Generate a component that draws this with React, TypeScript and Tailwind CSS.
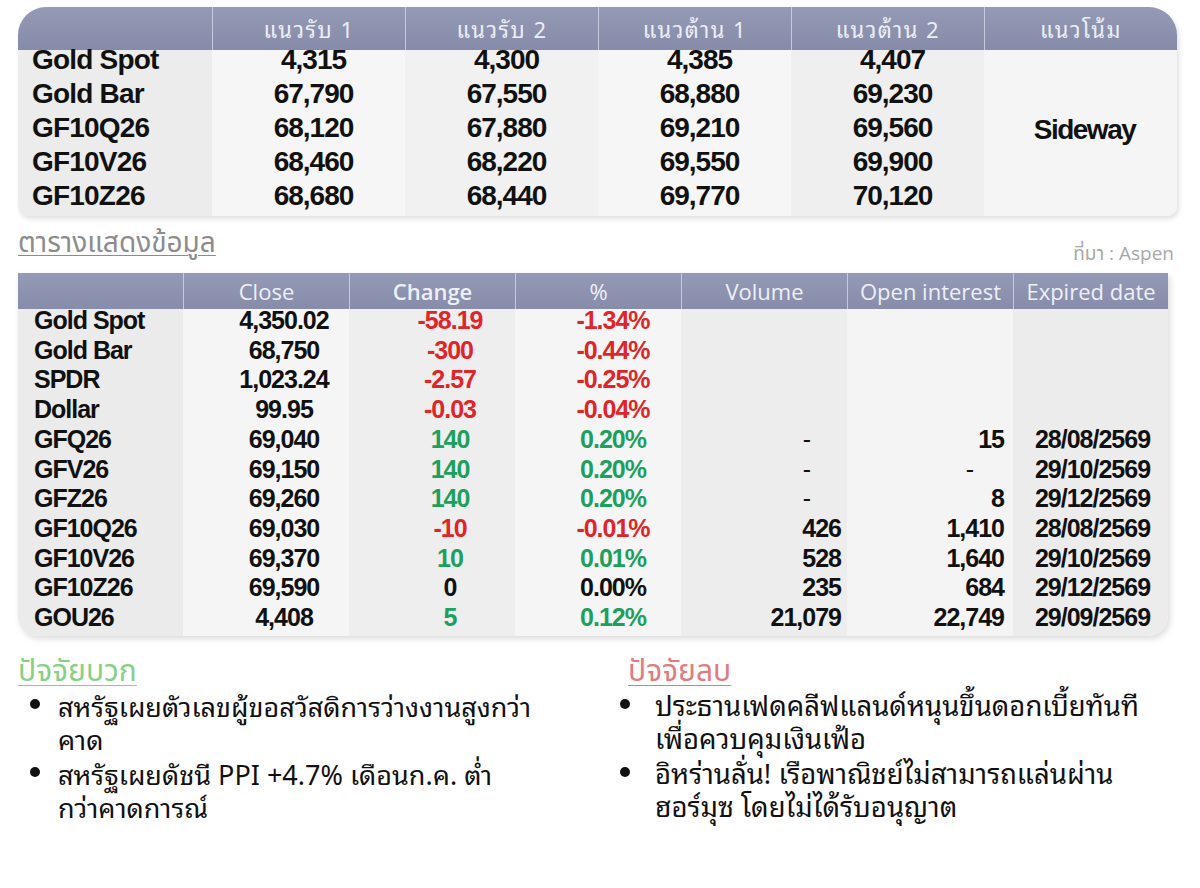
import React from 'react';

const THAI = { fontFamily: '"Noto Sans Thai", "Loma", "Garuda", "Tahoma", "DejaVu Sans", sans-serif' };
const THAI_LOOP = { fontFamily: '"Noto Sans Thai Looped", "Noto Serif Thai", "Garuda", "Noto Sans Thai", sans-serif' };
const NUM = { fontFamily: '"Liberation Sans", Arial, sans-serif' };
const HEAD = { fontFamily: '"Open Sans", "Noto Sans", sans-serif' };

const LEVELS = [
  ['Gold Spot', '4,315', '4,300', '4,385', '4,407'],
  ['Gold Bar', '67,790', '67,550', '68,880', '69,230'],
  ['GF10Q26', '68,120', '67,880', '69,210', '69,560'],
  ['GF10V26', '68,460', '68,220', '69,550', '69,900'],
  ['GF10Z26', '68,680', '68,440', '69,770', '70,120'],
];

type Dir = 'up' | 'down' | 'flat';

const MARKET: { name: string; close: string; change: string; pct: string; dir: Dir; vol: string; oi: string; exp: string }[] = [
  { name: 'Gold Spot', close: '4,350.02', change: '-58.19', pct: '-1.34%', dir: 'down', vol: '', oi: '', exp: '' },
  { name: 'Gold Bar', close: '68,750', change: '-300', pct: '-0.44%', dir: 'down', vol: '', oi: '', exp: '' },
  { name: 'SPDR', close: '1,023.24', change: '-2.57', pct: '-0.25%', dir: 'down', vol: '', oi: '', exp: '' },
  { name: 'Dollar', close: '99.95', change: '-0.03', pct: '-0.04%', dir: 'down', vol: '', oi: '', exp: '' },
  { name: 'GFQ26', close: '69,040', change: '140', pct: '0.20%', dir: 'up', vol: '-', oi: '15', exp: '28/08/2569' },
  { name: 'GFV26', close: '69,150', change: '140', pct: '0.20%', dir: 'up', vol: '-', oi: '-', exp: '29/10/2569' },
  { name: 'GFZ26', close: '69,260', change: '140', pct: '0.20%', dir: 'up', vol: '-', oi: '8', exp: '29/12/2569' },
  { name: 'GF10Q26', close: '69,030', change: '-10', pct: '-0.01%', dir: 'down', vol: '426', oi: '1,410', exp: '28/08/2569' },
  { name: 'GF10V26', close: '69,370', change: '10', pct: '0.01%', dir: 'up', vol: '528', oi: '1,640', exp: '29/10/2569' },
  { name: 'GF10Z26', close: '69,590', change: '0', pct: '0.00%', dir: 'flat', vol: '235', oi: '684', exp: '29/12/2569' },
  { name: 'GOU26', close: '4,408', change: '5', pct: '0.12%', dir: 'up', vol: '21,079', oi: '22,749', exp: '29/09/2569' },
];

const dirColor = (d: Dir) =>
  d === 'down' ? 'text-[#e0252a]' : d === 'up' ? 'text-[#1d9f5e]' : 'text-[#111]';

const TopTable = () => {
  const heads = ['แนวรับ 1', 'แนวรับ 2', 'แนวต้าน 1', 'แนวต้าน 2', 'แนวโน้ม'];
  const colBg = ['bg-[#ececec]', 'bg-[#f6f6f6]', 'bg-[#f1f1f1]', 'bg-[#f6f6f6]', 'bg-[#efefef]', 'bg-[#f5f5f5]'];
  return (
    <div className="mx-[18px] mt-[7px] w-[1159px] rounded-t-[28px] rounded-b-[10px] overflow-hidden shadow-[2px_3px_5px_rgba(0,0,0,0.12)]">
      {/* header */}
      <div className="grid grid-cols-[194px_repeat(5,193px)] h-[43px] bg-gradient-to-b from-[#959ab6] to-[#858ba8]">
        <div />
        {heads.map((h) => (
          <div
            key={h}
            className="flex items-center justify-center border-l border-[#c7cadc] text-[22px] text-[#eceef5] tracking-[1.5px]"
            style={THAI_LOOP}
          >
            {h}
          </div>
        ))}
      </div>
      {/* body */}
      <div className="grid grid-cols-[194px_repeat(5,193px)] h-[166px]" style={NUM}>
        <div className={colBg[0]}>
          {LEVELS.map((r) => (
            <div key={r[0]} className="h-[34px] pb-[14px] pl-[14px] flex items-center text-[28px] font-bold tracking-[-0.8px] text-[#111]">
              {r[0]}
            </div>
          ))}
        </div>
        {[1, 2, 3, 4].map((c) => (
          <div key={c} className={colBg[c]}>
            {LEVELS.map((r) => (
              <div key={r[0]} className="h-[34px] pb-[14px] pl-[10px] flex items-center justify-center text-[28px] font-bold tracking-[-1px] text-[#111]">
                {r[c]}
              </div>
            ))}
          </div>
        ))}
        <div className={`${colBg[5]} flex items-center justify-center pb-[10px] pl-[8px] text-[28px] font-bold tracking-[-1.5px] text-[#111]`}>
          Sideway
        </div>
      </div>
    </div>
  );
};

const MarketTable = () => {
  const heads = ['Close', 'Change', '%', 'Volume', 'Open interest', 'Expired date'];
  const colBg = ['bg-[#ebebeb]', 'bg-[#f5f5f5]', 'bg-[#eeeeee]', 'bg-[#f5f5f5]', 'bg-[#ededed]', 'bg-[#f4f4f4]', 'bg-[#ececec]'];
  const cell = 'h-[29.7px] pb-[6px] flex items-center text-[25px] font-bold tracking-[-1px]';
  return (
    <div className="mx-[18px] w-[1150px] rounded-b-[20px] overflow-hidden shadow-[2px_3px_6px_rgba(0,0,0,0.14)]">
      <div className="grid grid-cols-[165px_166px_166px_166px_166px_166px_155px] h-[36px] bg-gradient-to-b from-[#959ab6] to-[#868ca9]" style={HEAD}>
        <div />
        {heads.map((h) => (
          <div
            key={h}
            className={`flex items-center justify-center border-l border-[#c7cadc] text-[22px] text-[#eef0f6] ${h === 'Change' ? 'font-semibold' : 'font-normal'}`}
          >
            {h}
          </div>
        ))}
      </div>
      <div className="grid grid-cols-[165px_166px_166px_166px_166px_166px_155px] text-[#111]" style={NUM}>
        <div className={colBg[0]}>
          {MARKET.map((r) => (
            <div key={r.name} className={`${cell} pl-[16px]`}>{r.name}</div>
          ))}
        </div>
        <div className={colBg[1]}>
          {MARKET.map((r) => (
            <div key={r.name} className={`${cell} justify-center pl-[36px]`}>{r.close}</div>
          ))}
        </div>
        <div className={colBg[2]}>
          {MARKET.map((r) => (
            <div key={r.name} className={`${cell} justify-center pl-[36px] ${dirColor(r.dir)}`}>{r.change}</div>
          ))}
        </div>
        <div className={colBg[3]}>
          {MARKET.map((r) => (
            <div key={r.name} className={`${cell} justify-center pl-[30px] ${dirColor(r.dir)}`}>{r.pct}</div>
          ))}
        </div>
        <div className={colBg[4]}>
          {MARKET.map((r) => (
            <div key={r.name} className={`${cell} justify-end ${r.vol === '-' ? 'pr-[37px] font-normal' : 'pr-[6px]'}`}>{r.vol}</div>
          ))}
        </div>
        <div className={colBg[5]}>
          {MARKET.map((r) => (
            <div key={r.name} className={`${cell} justify-end ${r.oi === '-' ? 'pr-[40px] font-normal' : 'pr-[9px]'}`}>{r.oi}</div>
          ))}
        </div>
        <div className={colBg[6]}>
          {MARKET.map((r) => (
            <div key={r.name} className={`${cell} justify-center pl-[4px]`}>{r.exp}</div>
          ))}
        </div>
      </div>
    </div>
  );
};

const Factor = ({ title, color, items, bulletW, textSize }: { title: string; color: string; items: string[][]; bulletW: string; textSize: string }) => (
  <div>
    <div className={`text-[30px] leading-[36px] underline underline-offset-[4px] decoration-1 ${color}`} style={THAI}>{title}</div>
    <ul className="-mt-[2px]" style={THAI_LOOP}>
      {items.map((lines, i) => (
        <li key={i} className="flex pb-[2px]">
          <span className={`${bulletW} h-[33px] flex items-center shrink-0`}>
            <span className="w-[10px] h-[10px] rounded-full bg-[#111]" />
          </span>
          <span className={`${textSize} leading-[33px] text-[#111]`}>
            {lines.map((l, j) => (
              <span key={j} className="block">{l}</span>
            ))}
          </span>
        </li>
      ))}
    </ul>
  </div>
);

const App = () => {
  return (
    <div className="w-[1200px] h-[888px] bg-white overflow-hidden">
      <TopTable />
      <div className="mx-[18px] mt-[11px] flex items-end justify-between w-[1156px]">
        <div className="text-[28px] leading-[34px] text-[#8c8c8c] underline underline-offset-[3px] decoration-1" style={THAI}>
          ตารางแสดงข้อมูล
        </div>
        <div className="text-[19px] leading-[22px] text-[#a8a8a8] mb-[-3px]" style={{ fontFamily: '"Open Sans", "Noto Sans Thai", "Loma", sans-serif' }}>
          ที่มา : Aspen
        </div>
      </div>
      <div className="mt-[12px]">
        <MarketTable />
      </div>
      <div className="mt-[18px] grid grid-cols-[610px_1fr] pl-[18px]">
        <Factor
          title="ปัจจัยบวก"
          color="text-[#88cf88]"
          bulletW="w-[40px] pl-[12px]"
          textSize="text-[27px]"
          items={[
            ['สหรัฐเผยตัวเลขผู้ขอสวัสดิการว่างงานสูงกว่า', 'คาด'],
            ['สหรัฐเผยดัชนี PPI +4.7% เดือนก.ค. ต่ำ', 'กว่าคาดการณ์'],
          ]}
        />
        <Factor
          title="ปัจจัยลบ"
          color="text-[#e07c80]"
          bulletW="w-[37px] -ml-[10px] pl-[2px]"
          textSize="text-[27.5px]"
          items={[
            ['ประธานเฟดคลีฟแลนด์หนุนขึ้นดอกเบี้ยทันที', 'เพื่อควบคุมเงินเฟ้อ'],
            ['อิหร่านลั่น! เรือพาณิชย์ไม่สามารถแล่นผ่าน', 'ฮอร์มุซ โดยไม่ได้รับอนุญาต'],
          ]}
        />
      </div>
    </div>
  );
};

export default App;
